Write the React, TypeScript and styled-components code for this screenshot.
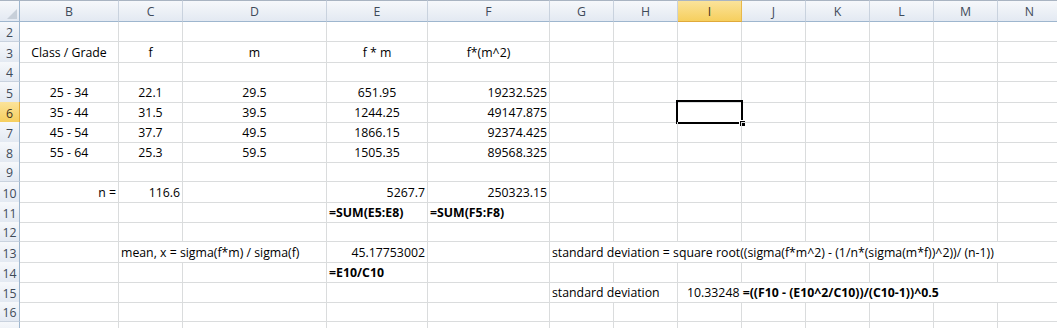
import React, { FC } from "react";
import styled, { createGlobalStyle, css } from "styled-components";

type Align = "left" | "center" | "right";

type CellData = {
  text?: React.ReactNode;
  align?: Align;
  bold?: boolean;
  span?: number;
  indent?: number;
};

type RowData = {
  num: number;
  label?: string;
  cells: Record<string, CellData>;
};

const columns = [
  { id: "B", w: 99 },
  { id: "C", w: 64 },
  { id: "D", w: 144 },
  { id: "E", w: 101 },
  { id: "F", w: 122 },
  { id: "G", w: 64 },
  { id: "H", w: 64 },
  { id: "I", w: 64 },
  { id: "J", w: 64 },
  { id: "K", w: 64 },
  { id: "L", w: 64 },
  { id: "M", w: 64 },
  { id: "N", w: 64 },
];

const SELECTED_COL = "I";
const SELECTED_ROW = 6;

const gridTemplate = `20px ${columns.map((c) => `${c.w}px`).join(" ")}`;

const GlobalStyle = createGlobalStyle`
  html, body {
    margin: 0;
    padding: 0;
    background: #ffffff;
    overflow: hidden;
  }
  body {
    font-family: "Open Sans", Lato, "Liberation Sans", sans-serif;
  }
`;

const Sheet = styled.div`
  width: 1057px;
  height: 328px;
  overflow: hidden;
  background: #ffffff;
  font-size: 12.3px;
  color: #000000;
`;

const Row = styled.div<{ $header?: boolean }>`
  display: grid;
  grid-template-columns: ${gridTemplate};
  height: ${({ $header }) => ($header ? "22px" : "20px")};
`;

const headerBg = css`
  background: linear-gradient(#f6f8fb, #e3e9f2);
  color: #3e4a59;
`;

const selectedBg = css`
  background: linear-gradient(#fbe39a, #f6cf5e);
  color: #3d3320;
`;

const Corner = styled.div`
  ${headerBg};
  position: relative;
  border-top: 1px solid #a9b4c2;
  border-right: 1px solid #9eb6ce;
  border-bottom: 1px solid #9eb6ce;
  box-sizing: border-box;

  &::after {
    content: "";
    position: absolute;
    right: 2px;
    bottom: 2px;
    width: 0;
    height: 0;
    border-left: 10px solid transparent;
    border-bottom: 10px solid #c7cfd9;
  }
`;

const ColHeader = styled.div<{ $active?: boolean }>`
  ${({ $active }) => ($active ? selectedBg : headerBg)};
  box-sizing: border-box;
  border-top: 1px solid #a9b4c2;
  border-right: 1px solid ${({ $active }) => ($active ? "#e8b84a" : "#c9d2de")};
  border-bottom: 1px solid ${({ $active }) => ($active ? "#e0a93a" : "#9eb6ce")};
  display: flex;
  align-items: center;
  justify-content: center;
  font-size: 12.3px;
  padding-top: 1px;
`;

const RowHeader = styled.div<{ $active?: boolean }>`
  ${({ $active }) => ($active ? selectedBg : headerBg)};
  box-sizing: border-box;
  border-right: 1px solid ${({ $active }) => ($active ? "#e0a93a" : "#9eb6ce")};
  border-bottom: 1px solid ${({ $active }) => ($active ? "#e8b84a" : "#c9d2de")};
  display: flex;
  align-items: center;
  justify-content: center;
  font-size: 12.3px;
  padding-top: 2px;
`;

const Cell = styled.div<{ $align: Align; $bold?: boolean; $span: number; $indent?: number }>`
  position: relative;
  grid-column: span ${({ $span }) => $span};
  box-sizing: border-box;
  border-right: 1px solid #dadcdd;
  border-bottom: 1px solid #dadcdd;
  line-height: 19px;
  padding: 1px 2px 0 ${({ $indent }) => ($indent ? `${$indent}px` : "2px")};
  text-align: ${({ $align }) => $align};
  font-weight: ${({ $bold }) => ($bold ? 700 : 400)};
  white-space: pre;
  overflow: visible;
`;

const Strong = styled.span`
  font-weight: 700;
`;

const Selection = styled.div`
  position: absolute;
  left: -2px;
  top: -2px;
  right: -2px;
  bottom: -2px;
  border: 2px solid #000000;
  pointer-events: none;

  &::after {
    content: "";
    position: absolute;
    right: -5px;
    bottom: -5px;
    width: 5px;
    height: 5px;
    background: #000000;
    border: 1px solid #ffffff;
  }
`;

const rows: RowData[] = [
  { num: 2, cells: {} },
  {
    num: 3,
    cells: {
      B: { text: "Class / Grade", align: "center" },
      C: { text: "f", align: "center" },
      D: { text: "m", align: "center" },
      E: { text: "f * m", align: "center" },
      F: { text: "f*(m^2)", align: "center" },
    },
  },
  { num: 4, cells: {} },
  {
    num: 5,
    cells: {
      B: { text: "25 - 34", align: "center" },
      C: { text: "22.1", align: "center" },
      D: { text: "29.5", align: "center" },
      E: { text: "651.95", align: "center" },
      F: { text: "19232.525", align: "right" },
    },
  },
  {
    num: 6,
    cells: {
      B: { text: "35 - 44", align: "center" },
      C: { text: "31.5", align: "center" },
      D: { text: "39.5", align: "center" },
      E: { text: "1244.25", align: "center" },
      F: { text: "49147.875", align: "right" },
    },
  },
  {
    num: 7,
    cells: {
      B: { text: "45 - 54", align: "center" },
      C: { text: "37.7", align: "center" },
      D: { text: "49.5", align: "center" },
      E: { text: "1866.15", align: "center" },
      F: { text: "92374.425", align: "right" },
    },
  },
  {
    num: 8,
    cells: {
      B: { text: "55 - 64", align: "center" },
      C: { text: "25.3", align: "center" },
      D: { text: "59.5", align: "center" },
      E: { text: "1505.35", align: "center" },
      F: { text: "89568.325", align: "right" },
    },
  },
  { num: 9, cells: {} },
  {
    num: 10,
    cells: {
      B: { text: "n =", align: "right" },
      C: { text: "116.6", align: "right" },
      E: { text: "5267.7", align: "right" },
      F: { text: "250323.15", align: "right" },
    },
  },
  {
    num: 11,
    cells: {
      E: { text: "=SUM(E5:E8)", align: "left", bold: true },
      F: { text: "=SUM(F5:F8)", align: "left", bold: true },
    },
  },
  { num: 12, cells: {} },
  {
    num: 13,
    cells: {
      C: { text: "mean, x = sigma(f*m) / sigma(f)", align: "left", span: 2 },
      E: { text: "45.17753002", align: "right" },
      G: {
        text: "standard deviation = square root((sigma(f*m^2) - (1/n*(sigma(m*f))^2))/ (n-1))",
        align: "left",
        span: 8,
      },
    },
  },
  {
    num: 14,
    cells: {
      E: { text: "=E10/C10", align: "left", bold: true },
    },
  },
  {
    num: 15,
    cells: {
      G: { text: "standard deviation", align: "left", span: 2 },
      I: {
        text: (
          <>
            10.33248 <Strong>=((F10 - (E10^2/C10))/(C10-1))^0.5</Strong>
          </>
        ),
        align: "left",
        span: 6,
        indent: 9,
      },
    },
  },
  { num: 16, cells: {} },
  { num: 17, label: "", cells: {} },
];

const SheetRow: FC<{ row: RowData }> = ({ row }) => {
  const out: React.ReactNode[] = [];
  let i = 0;
  while (i < columns.length) {
    const col = columns[i];
    const data = row.cells[col.id] || {};
    const span = data.span || 1;
    const selected = col.id === SELECTED_COL && row.num === SELECTED_ROW;
    out.push(
      <Cell
        key={col.id}
        $align={data.align || "left"}
        $bold={data.bold}
        $span={span}
        $indent={data.indent}
      >
        {data.text}
        {selected && <Selection />}
      </Cell>
    );
    i += span;
  }
  return (
    <Row>
      <RowHeader $active={row.num === SELECTED_ROW}>
        {row.label ?? row.num}
      </RowHeader>
      {out}
    </Row>
  );
};

const App: FC = () => (
  <>
    <GlobalStyle />
    <Sheet>
      <Row $header>
        <Corner />
        {columns.map((c) => (
          <ColHeader key={c.id} $active={c.id === SELECTED_COL}>
            {c.id}
          </ColHeader>
        ))}
      </Row>
      {rows.map((r) => (
        <SheetRow key={r.num} row={r} />
      ))}
    </Sheet>
  </>
);

export default App;
